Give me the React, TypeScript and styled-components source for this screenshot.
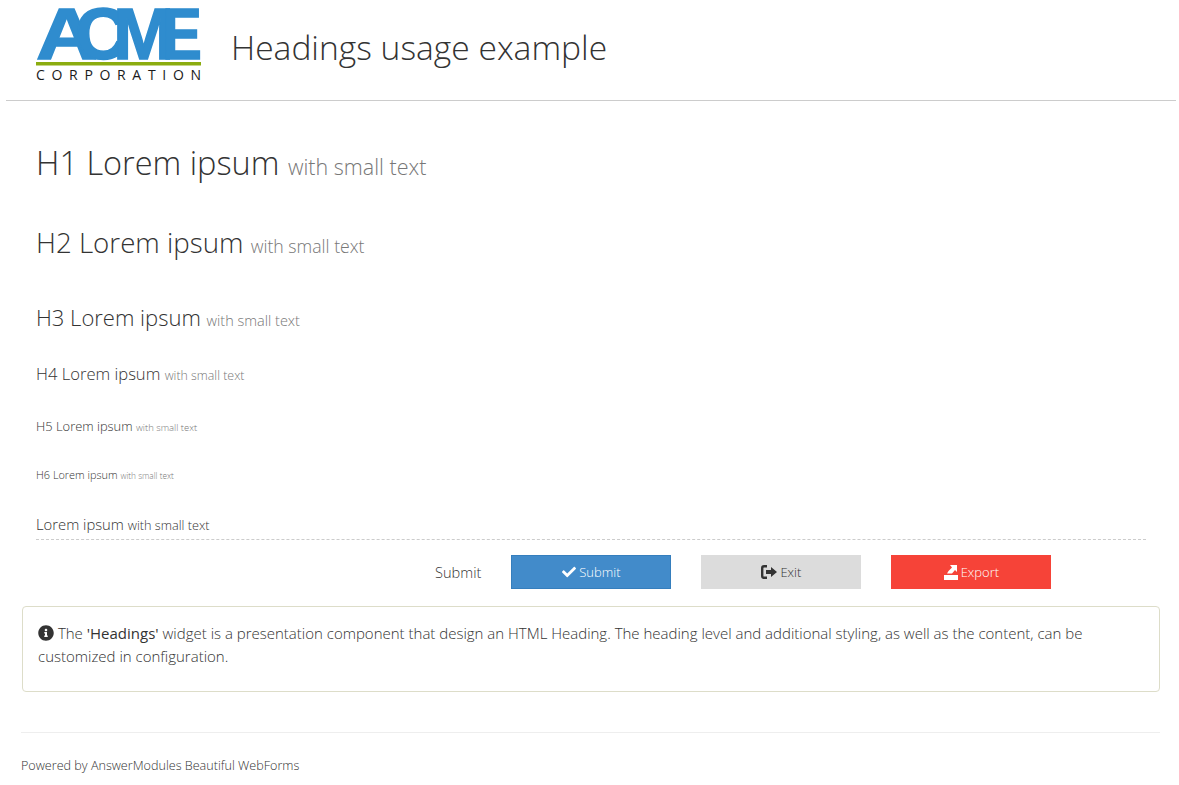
import React from "react";
import styled, { createGlobalStyle } from "styled-components";
import { FaCheck, FaInfoCircle } from "react-icons/fa";

const GlobalStyle = createGlobalStyle`
  html, body {
    margin: 0;
    padding: 0;
    background: #fff;
    font-family: "Open Sans", "Liberation Sans", sans-serif;
    font-weight: 300;
    color: #333;
  }
`;

const headings = [
  { level: 1, size: 32.5, small: 21.5, gap: 40 },
  { level: 2, size: 27.7, small: 17.7, gap: 41 },
  { level: 3, size: 22, small: 14.5, gap: 30 },
  { level: 4, size: 16.6, small: 12.4, gap: 33 },
  { level: 5, size: 12.9, small: 9.5, gap: 33 },
  { level: 6, size: 10.9, small: 8.3, gap: 32 },
];

// letters of the logo run into each other, each one stretched to its own width
const logoLetters = [
  { ch: "A", x: 0, scale: 1.18 },
  { ch: "C", x: 39, scale: 1.02 },
  { ch: "M", x: 77, scale: 1.02 },
  { ch: "E", x: 126, scale: 0.83 },
];

function Logo(): React.ReactElement {
  return (
    <svg width="166" height="78" viewBox="0 0 166 78">
      {logoLetters.map(l => (
        <text
          key={l.ch}
          transform={`translate(${l.x} 53) scale(${l.scale} 1)`}
          fill="#2f8cce"
          stroke="#2f8cce"
          strokeWidth="1.5"
          fontFamily="Liberation Sans"
          fontWeight="700"
          fontSize="72"
        >
          {l.ch}
        </text>
      ))}
      <rect x="0" y="56" width="165" height="3.500" fill="#8bac0f" />
      <text x="0" y="74" fill="#1a1a1a" fontFamily="Open Sans" fontWeight="400" fontSize="14" textLength="165">
        CORPORATION
      </text>
    </svg>
  );
}

function ExitIcon(): React.ReactElement {
  return (
    <svg width="16" height="14" viewBox="0 0 16 14">
      <path d="M6 1.200H3A1.800 1.800 0 0 0 1.200 3v8A1.800 1.800 0 0 0 3 12.800H6" fill="none" stroke="#333" strokeWidth="2.400" />
      <path d="M5 5h5V2l6 5-6 5V9H5z" fill="#333" />
    </svg>
  );
}

function ExportIcon(): React.ReactElement {
  return (
    <svg width="14" height="15" viewBox="0 0 14 15">
      <path d="M6 0h7v7l-2-2-3 3.500H3l1.500-2.500L8 2.500z" fill="#fff" />
      <path d="M0 10h14v5H0z" fill="#fff" />
    </svg>
  );
}

function App(): React.ReactElement {
  return (
    <>
      <GlobalStyle />
      <Page>
        <Header>
          <Logo />
          <PageTitle>Headings usage example</PageTitle>
        </Header>
        <Content>
          <HeadingList>
            {headings.map(h => (
              <HeadingRow key={h.level} $size={h.size} $gap={h.gap}>
                H{h.level} Lorem ipsum <Small $size={h.small}>with small text</Small>
              </HeadingRow>
            ))}
            <PlainRow>
              Lorem ipsum <Small $size={12.7} $dark>with small text</Small>
            </PlainRow>
          </HeadingList>
          <ButtonRow>
            <ButtonLabel>Submit</ButtonLabel>
            <ActionButton $bg="#428bca" $border="#357ebd" $color="#fff">
              <FaCheck size={14} /> Submit
            </ActionButton>
            <ActionButton $bg="#dcdcdc" $border="#dcdcdc" $color="#333">
              <ExitIcon /> Exit
            </ActionButton>
            <ActionButton $bg="#f64338" $border="#f64338" $color="#fff">
              <ExportIcon /> Export
            </ActionButton>
          </ButtonRow>
        </Content>
        <InfoBox>
          <FaInfoCircle size={16} color="#333" /> The <Strong>'Headings'</Strong> widget is a presentation
          component that design an HTML Heading. The heading level and additional styling, as well as the
          content, can be customized in configuration.
        </InfoBox>
        <Footer>Powered by AnswerModules Beautiful WebForms</Footer>
      </Page>
    </>
  );
}

export default App;

const Page = styled.div`
  width: 1179px;
  height: 785px;
  overflow: hidden;
`;

const Header = styled.header`
  display: flex;
  align-items: flex-start;
  gap: 29px;
  height: 101px;
  margin: 0 3px 0 6px;
  padding: 6px 0 0 30px;
  box-sizing: border-box;
  border-bottom: 1px solid #ccc;
`;

const PageTitle = styled.div`
  font-size: 33.6px;
  line-height: 44px;
  margin-top: 19px;
  color: #333;
`;

const Content = styled.div`
  padding: 42px 33px 0 36px;
`;

const HeadingList = styled.div`
  display: flex;
  flex-direction: column;
  border-bottom: 1px dashed #ccc;
`;

const HeadingRow = styled.div<{ $size: number; $gap: number }>`
  font-size: ${p => p.$size}px;
  line-height: ${p => Math.round(p.$size * 1.2)}px;
  margin-bottom: ${p => p.$gap}px;
`;

const Small = styled.span<{ $size: number; $dark?: boolean }>`
  font-size: ${p => p.$size}px;
  color: ${p => (p.$dark ? "#333" : "#777")};
`;

const PlainRow = styled.div`
  font-size: 14.8px;
  line-height: 20px;
  padding-bottom: 4px;
`;

const ButtonRow = styled.div`
  display: flex;
  align-items: center;
  gap: 30px;
  margin-top: 15px;
  padding-left: 399px;
`;

const ButtonLabel = styled.div`
  font-size: 14.6px;
`;

const ActionButton = styled.button<{ $bg: string; $border: string; $color: string }>`
  display: flex;
  align-items: center;
  justify-content: center;
  gap: 3px;
  width: 160px;
  height: 34px;
  padding: 0;
  font: inherit;
  font-size: 13px;
  background: ${p => p.$bg};
  border: 1px solid ${p => p.$border};
  color: ${p => p.$color};
`;

const InfoBox = styled.div`
  margin: 17px 19px 0 22px;
  padding: 15px 15px 0;
  height: 86px;
  box-sizing: border-box;
  border: 1px solid #ddddc9;
  border-radius: 4px;
  font-size: 15px;
  line-height: 23px;
  color: #333;

  svg {
    vertical-align: -2px;
  }
`;

const Strong = styled.span`
  font-weight: 400;
`;

const Footer = styled.footer`
  margin: 40px 19px 0 21px;
  padding-top: 24px;
  border-top: 1px solid #eee;
  font-size: 12.6px;
  line-height: 18px;
`;
